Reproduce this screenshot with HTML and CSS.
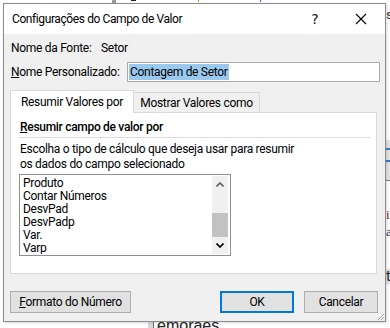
FILE: index.html
```html
<!DOCTYPE html>
<html lang="pt">
<head>
<meta charset="utf-8">
<title>Configurações do Campo de Valor</title>
<link rel="stylesheet" href="styles.css">
</head>
<body>
<div class="sheet">
  <span class="frag frag-bar"></span>
  <span class="frag frag-dark"></span>
  <span class="frag frag-orange"></span>
  <span class="frag frag-blue"></span>
  <span class="frag frag-s">s</span>
  <span class="frag frag-gray"></span>
  <span class="frag frag-line1"></span>
  <span class="frag frag-line2"></span>
  <span class="frag frag-rule"></span>
  <span class="frag frag-i">i</span>
  <span class="frag frag-a">a</span>
  <span class="frag frag-cell">t</span>
  <span class="frag frag-col"></span>
  <span class="frag frag-name">emoraes</span>
</div>

<div class="dialog">
  <div class="titlebar">
    <span class="title">Configurações do Campo de Valor</span>
    <span class="tb-btn help">?</span>
    <span class="tb-btn close">
      <svg width="12" height="12" viewBox="0 0 12 12"><path d="M1 1 L11 11 M11 1 L1 11" stroke="#000" stroke-width="1.1" fill="none"/></svg>
    </span>
  </div>
  <div class="content">
    <div class="row source">
      <span class="lbl">Nome da Fonte:</span>
      <span class="val">Setor</span>
    </div>
    <div class="row custom">
      <label class="lbl"><u>N</u>ome Personalizado:</label>
      <div class="input"><span class="sel">Contagem de Setor</span></div>
    </div>
    <div class="tabs">
      <div class="tab active">Resumir Valores por</div>
      <div class="tab">Mostrar Valores como</div>
    </div>
    <div class="panel">
      <div class="heading"><u>R</u>esumir campo de valor por</div>
      <div class="sep"></div>
      <p class="desc">Escolha o tipo de cálculo que deseja usar para resumir<br>os dados do campo selecionado</p>
      <div class="listbox">
        <ul class="items">
          <li>Produto</li>
          <li>Contar Números</li>
          <li>DesvPad</li>
          <li>DesvPadp</li>
          <li>Var.</li>
          <li>Varp</li>
        </ul>
        <div class="scrollbar">
          <span class="arrow"><svg width="8" height="5" viewBox="0 0 8 5"><path d="M0.5 4.5 L4 1 L7.5 4.5" stroke="#606060" stroke-width="1.6" fill="none"/></svg></span>
          <span class="track"><span class="thumb"></span></span>
          <span class="arrow"><svg width="8" height="5" viewBox="0 0 8 5"><path d="M0.5 0.5 L4 4 L7.5 0.5" stroke="#000" stroke-width="1.6" fill="none"/></svg></span>
        </div>
      </div>
    </div>
    <div class="buttons">
      <button class="btn fmt"><u>F</u>ormato do Número</button>
      <span class="spacer"></span>
      <button class="btn ok">OK</button>
      <button class="btn cancel">Cancelar</button>
    </div>
    <span class="grip">
      <svg width="8" height="8" viewBox="0 0 8 8"><path d="M7 1 L1 7 M7 4 L4 7" stroke="#a0a0a0" stroke-width="1" fill="none"/></svg>
    </span>
  </div>
</div>
</body>
</html>
```

FILE: styles.css
```css
* { box-sizing: border-box; }

html, body {
  margin: 0;
  padding: 0;
}

body {
  width: 390px;
  height: 328px;
  overflow: hidden;
  background: #ffffff;
  position: relative;
  font-family: Roboto, "Noto Sans", sans-serif;
  font-size: 12px;
  letter-spacing: -0.3px;
  color: #000;
}

/* spreadsheet behind the dialog */
.sheet {
  width: 390px;
  height: 328px;
  position: relative;
  overflow: hidden;
  letter-spacing: 0;
}
.frag { position: absolute; display: block; }
.frag-bar { left: 112px; top: 0; width: 4px; height: 3px; background: #9a9a9a; }
.frag-dark { left: 131px; top: 0; width: 5px; height: 1px; background: #222; }
.frag-orange { left: 198px; top: 0; width: 1px; height: 2px; background: #d68a2a; }
.frag-blue { left: 260px; top: 0; width: 1px; height: 2px; background: #2a6fd6; }
.frag-s { left: 386px; top: 8px; font-size: 13px; line-height: 14px; color: #333; }
.frag-gray { left: 386px; top: 140px; width: 4px; height: 40px; background: #e3e3e3; }
.frag-line1 { left: 386px; top: 148px; width: 4px; height: 2px; background: #2f7cd0; }
.frag-line2 { left: 386px; top: 160px; width: 4px; height: 2px; background: #2f7cd0; }
.frag-rule { left: 386px; top: 180px; width: 4px; height: 1px; background: #808080; }
.frag-i { left: 386px; top: 209px; font-family: "Liberation Serif", serif; font-size: 13px; line-height: 12px; color: #7a1c1c; }
.frag-a { left: 386px; top: 226px; font-family: "Liberation Serif", serif; font-size: 13px; line-height: 12px; color: #1c2a6a; }
.frag-cell { left: 386px; top: 269px; width: 4px; height: 15px; background: #dfe3ea; font-size: 14px; line-height: 15px; color: #222; }
.frag-col { left: 148px; top: 321px; width: 6px; height: 7px; background: #d9d9d9; border-right: 1px solid #707070; }
.frag-name { left: 157px; top: 316px; font-family: "Liberation Sans", sans-serif; font-size: 16px; line-height: 20px; color: #222; }

/* dialog window */
.dialog {
  position: absolute;
  left: 3px;
  top: 3px;
  width: 383px;
  height: 319px;
  border: 1px solid #8c8c8c;
  background: #f0f0f0;
  display: flex;
  flex-direction: column;
  box-shadow: 1px 1px 3px rgba(0,0,0,0.15);
}

.titlebar {
  height: 30px;
  flex: none;
  background: #ffffff;
  display: flex;
  align-items: center;
}
.title {
  flex: 1;
  padding-left: 8px;
  font-size: 12px;
  line-height: 16px;
  letter-spacing: -0.4px;
  white-space: nowrap;
}
.tb-btn {
  width: 45px;
  height: 30px;
  display: flex;
  align-items: center;
  justify-content: center;
  flex: none;
}
.help {
  font-family: "DejaVu Sans", sans-serif;
  font-size: 14px;
  letter-spacing: 0;
  padding-right: 1px;
  color: #111;
}
.close { width: 47px; padding-right: 2px; }

.content {
  flex: 1;
  position: relative;
  padding: 0 7px 0 6px;
  display: flex;
  flex-direction: column;
}

.row {
  display: flex;
  align-items: center;
  padding-left: 1px;
  white-space: nowrap;
}
.lbl { flex: none; }
.source {
  margin-top: 6px;
  height: 16px;
  line-height: 16px;
}
.source .lbl { width: 90px; }
.custom {
  margin-top: 6px;
  height: 20px;
}
.custom .lbl { width: 116px; }
.input {
  flex: none;
  width: 253px;
  height: 20px;
  margin-right: -2px;
  border: 1px solid #a9a9a9;
  background: #fff;
  padding: 1px 1px;
  display: flex;
  align-items: center;
}
.sel {
  background: #99c9ef;
  line-height: 16px;
  padding: 0 1px;
}

/* tabs */
.tabs {
  margin-top: 8px;
  display: flex;
  align-items: flex-end;
  height: 22px;
  position: relative;
  z-index: 1;
}
.tab {
  flex: none;
  height: 20px;
  border: 1px solid #d9d9d9;
  border-bottom: none;
  background: #f0f0f0;
  display: flex;
  align-items: center;
  justify-content: center;
  line-height: 16px;
  width: 126px;
  border-left: none;
  padding-top: 1px;
  white-space: nowrap;
}
.tab.active {
  width: 124px;
  height: 23px;
  margin-bottom: -1px;
  background: #fff;
  border-left: 1px solid #d9d9d9;
  padding-top: 0;
  padding-bottom: 1px;
}

.panel {
  width: 367px;
  height: 162px;
  background: #fff;
  border: 1px solid #d9d9d9;
  padding: 6px 5px 0 8px;
}
.heading {
  font-weight: 500;
  line-height: 16px;
  padding-left: 1px;
}
.sep {
  margin-top: 2px;
  height: 1px;
  background: #dedede;
  margin-left: -1px;
}
.desc {
  margin: 4px 0 0 0;
  padding-left: 1px;
  line-height: 15px;
}
.listbox {
  margin-top: 2px;
  width: 212px;
  height: 82px;
  border: 1px solid #8f8f8f;
  padding: 1px;
  display: flex;
}
.items {
  list-style: none;
  margin: 0;
  padding: 1px 0 0 2px;
  flex: 1;
  overflow: hidden;
}
.items li {
  line-height: 13px;
  height: 13px;
  white-space: nowrap;
}
.scrollbar {
  width: 16px;
  margin-right: 1px;
  background: #f0f0f0;
  display: flex;
  flex-direction: column;
}
.arrow {
  height: 17px;
  display: flex;
  align-items: center;
  justify-content: center;
}
.track {
  flex: 1;
  display: flex;
  flex-direction: column;
  justify-content: flex-end;
}
.thumb {
  height: 24px;
  background: #c2c2c2;
}

/* buttons */
.buttons {
  margin-top: 17px;
  display: flex;
  align-items: center;
  height: 22px;
}
.btn {
  font-family: Roboto, "Noto Sans", sans-serif;
  font-size: 12px;
  letter-spacing: -0.3px;
  color: #000;
  height: 22px;
  background: #e1e1e1;
  border: 1px solid #adadad;
  padding: 0;
  line-height: 16px;
  margin: 0;
  flex: none;
}
.fmt { width: 121px; }
.spacer { flex: 1; }
.ok {
  width: 74px;
  border: 2px solid #0078d7;
}
.cancel {
  width: 74px;
  margin-left: 10px;
}

.grip {
  position: absolute;
  right: 0;
  bottom: 0;
  width: 8px;
  height: 8px;
  display: block;
}
.grip svg { display: block; }
```
